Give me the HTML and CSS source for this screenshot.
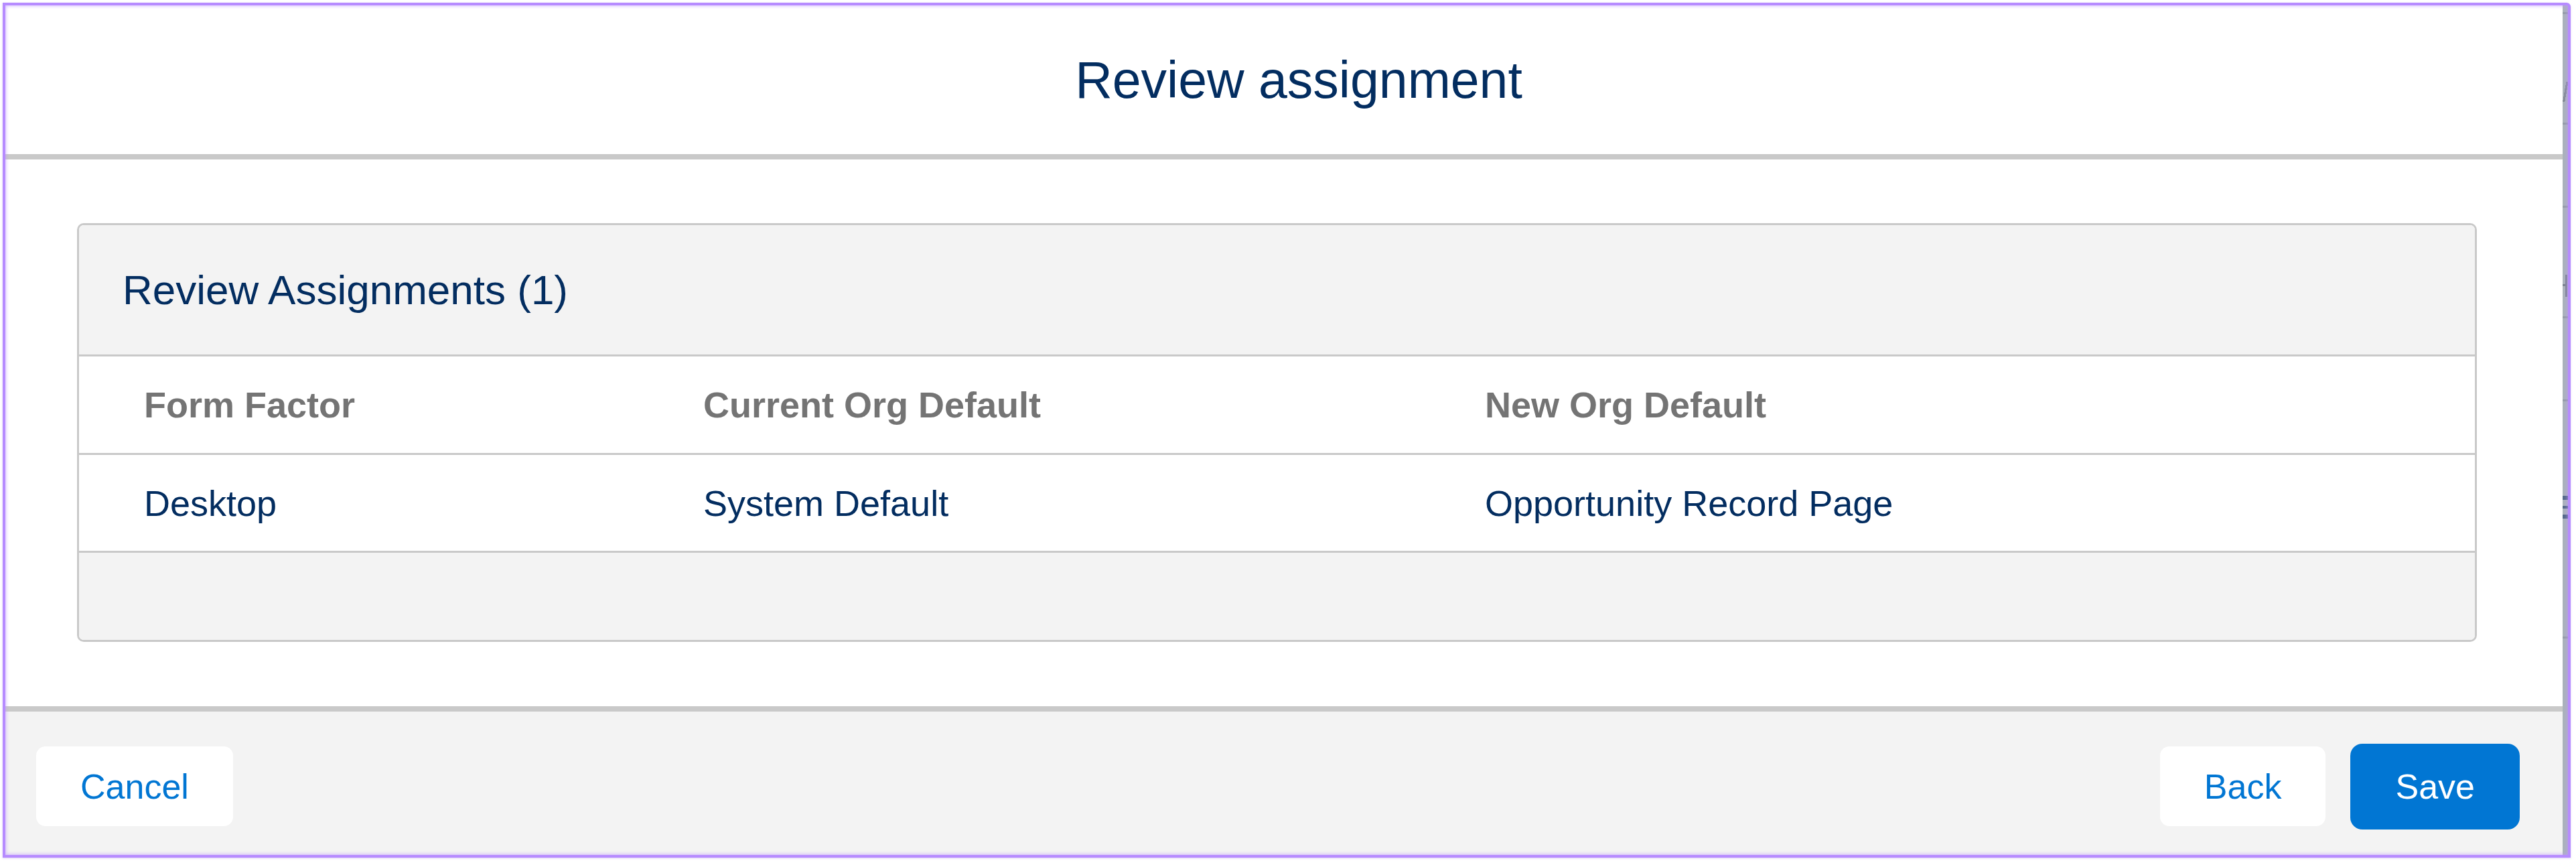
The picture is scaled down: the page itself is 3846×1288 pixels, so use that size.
FILE: index.html
```html
<!DOCTYPE html>
<html lang="en">
<head>
<meta charset="utf-8">
<title>Review assignment</title>
<link rel="stylesheet" href="styles.css">
</head>
<body>
<div class="frame">
  <div class="modal">
    <header class="modal-header">
      <h1 class="title">Review assignment</h1>
    </header>
    <main class="modal-body">
      <section class="card">
        <div class="card-header">
          <h2 class="card-title">Review Assignments (1)</h2>
        </div>
        <div class="row row-head">
          <div class="cell cell-head">Form Factor</div>
          <div class="cell cell-head">Current Org Default</div>
          <div class="cell cell-head">New Org Default</div>
        </div>
        <div class="row row-data">
          <div class="cell cell-data">Desktop</div>
          <div class="cell cell-data">System Default</div>
          <div class="cell cell-data">Opportunity Record Page</div>
        </div>
        <div class="card-footer"></div>
      </section>
    </main>
    <footer class="modal-footer">
      <button class="btn btn-neutral">Cancel</button>
      <div class="btn-group">
        <button class="btn btn-neutral">Back</button>
        <button class="btn btn-brand">Save</button>
      </div>
    </footer>
  </div>
  <div class="edge-strip"></div>
</div>
</body>
</html>
```

FILE: styles.css
```css
html, body {
  margin: 0;
  background: #ffffff;
}

body {
  padding: 4px;
  font-family: "Liberation Sans", Arial, sans-serif;
}

.frame {
  position: relative;
  box-sizing: border-box;
  width: 3834px;
  height: 1276px;
  border: 4px solid #b68bff;
  border-top-right-radius: 6px;
  display: flex;
  box-shadow: 0 1px 3px rgba(150, 110, 220, 0.35);
}

.frame::after {
  content: "";
  position: absolute;
  inset: 0;
  box-shadow: inset 0 0 5px 1px rgba(190, 150, 255, 0.65);
  pointer-events: none;
}

.modal {
  width: 3818px;
  display: flex;
  flex-direction: column;
  background: #ffffff;
}

.modal-header {
  box-sizing: border-box;
  height: 230px;
  border-bottom: 8px solid #c9c9c9;
  display: flex;
  align-items: center;
  justify-content: center;
  padding-left: 44px;
}

.title {
  margin: 0;
  font-size: 77px;
  font-weight: 400;
  line-height: 1;
  color: #032d60;
}

.modal-body {
  box-sizing: border-box;
  height: 816px;
  padding: 95px 128px 0 107px;
}

.card {
  border: 3px solid #c9c9c9;
  border-radius: 10px;
  overflow: hidden;
}

.card-header {
  height: 193px;
  background: #f3f3f3;
  display: flex;
  align-items: center;
  padding-left: 65px;
  border-bottom: 3px solid #c9c9c9;
}

.card-title {
  margin: 0;
  font-size: 62px;
  font-weight: 400;
  line-height: 1;
  color: #032d60;
}

.row {
  display: grid;
  grid-template-columns: 835px 1167px 1fr;
  align-items: center;
  padding-left: 97px;
  border-bottom: 3px solid #c9c9c9;
  background: #ffffff;
}

.row-head {
  height: 144px;
}

.row-data {
  height: 143px;
}

.cell {
  font-size: 54px;
  line-height: 1;
  white-space: nowrap;
}

.cell-head {
  font-weight: 700;
  color: #747474;
}

.cell-data {
  font-weight: 400;
  color: #032d60;
}

.card-footer {
  height: 130px;
  background: #f3f3f3;
}

.modal-footer {
  flex: 1;
  border-top: 8px solid #c9c9c9;
  background: #f3f3f3;
  display: flex;
  justify-content: space-between;
  align-items: center;
  padding: 9px 64px 0 46px;
}

.btn-group {
  display: flex;
  align-items: center;
  gap: 37px;
}

.btn {
  font-family: "Liberation Sans", Arial, sans-serif;
  font-size: 52px;
  line-height: 1;
  height: 119px;
  padding: 0 66px;
  border: none;
  border-radius: 14px;
  cursor: pointer;
}

.btn-neutral {
  background: #ffffff;
  color: #0176d3;
}

.btn-brand {
  height: 128px;
  padding: 0 67px;
  border-radius: 18px;
  background: #0176d3;
  color: #ffffff;
}

/* sliver of the page behind the modal, with fragments of its content */
.edge-strip {
  width: 8px;
  background:
    linear-gradient(#959ca8, #959ca8) 0 10px / 8px 3px no-repeat,
    linear-gradient(#959ca8, #959ca8) 0 175px / 8px 3px no-repeat,
    linear-gradient(#959ca8, #959ca8) 0 299px / 8px 3px no-repeat,
    linear-gradient(#959ca8, #959ca8) 0 464px / 8px 3px no-repeat,
    linear-gradient(#959ca8, #959ca8) 0 588px / 8px 3px no-repeat,
    linear-gradient(#959ca8, #959ca8) 0 942px / 8px 3px no-repeat,
    linear-gradient(100deg, transparent 0 40%, #858c97 40% 65%, transparent 65%) 0 114px / 8px 30px no-repeat,
    linear-gradient(#7c838f, #7c838f) 4px 402px / 3px 33px no-repeat,
    linear-gradient(#7c838f, #7c838f) 0 416px / 5px 3px no-repeat,
    linear-gradient(#55698a, #55698a) 0 732px / 8px 6px no-repeat,
    linear-gradient(#55698a, #55698a) 0 747px / 8px 4px no-repeat,
    linear-gradient(#55698a, #55698a) 0 760px / 8px 6px no-repeat,
    #aab1bb;
}
```
